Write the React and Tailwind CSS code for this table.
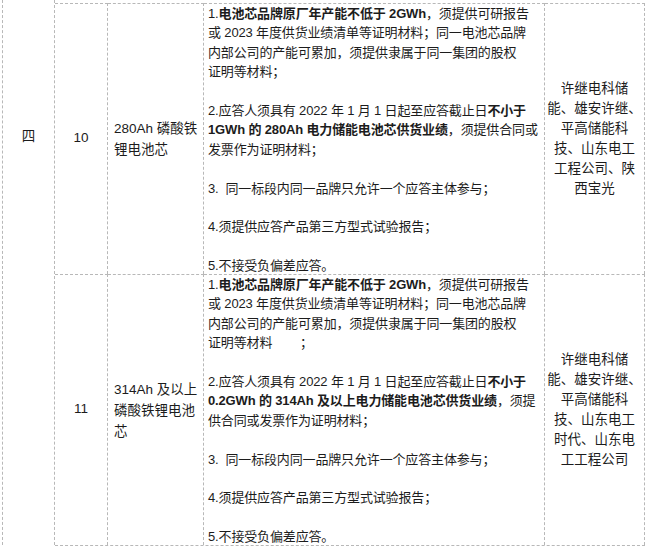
const rows = [
  {
    no: '10',
    name: ['280Ah 磷酸铁', '锂电池芯'],
    lines: [
      [['1.', false], ['电池芯品牌原厂年产能不低于 2GWh', true], ['，须提供可研报告', false]],
      [['或 2023 年度供货业绩清单等证明材料；同一电池芯品牌', false]],
      [['内部公司的产能可累加，须提供隶属于同一集团的股权', false]],
      [['证明等材料；', false]],
      null,
      [['2.应答人须具有 2022 年 1 月 1 日起至应答截止日', false], ['不小于', true]],
      [['1GWh 的 280Ah 电力储能电池芯供货业绩', true], ['，须提供合同或', false]],
      [['发票作为证明材料；', false]],
      null,
      [['3.  同一标段内同一品牌只允许一个应答主体参与；', false]],
      null,
      [['4.须提供应答产品第三方型式试验报告；', false]],
      null,
      [['5.不接受负偏差应答。', false]],
    ],
    vendors: ['许继电科储', '能、雄安许继、', '平高储能科', '技、山东电工', '工程公司、陕', '西宝光'],
  },
  {
    no: '11',
    name: ['314Ah 及以上', '磷酸铁锂电池', '芯'],
    lines: [
      [['1.', false], ['电池芯品牌原厂年产能不低于 2GWh', true], ['，须提供可研报告', false]],
      [['或 2023 年度供货业绩清单等证明材料；同一电池芯品牌', false]],
      [['内部公司的产能可累加，须提供隶属于同一集团的股权', false]],
      [['证明等材料        ；', false]],
      null,
      [['2.应答人须具有 2022 年 1 月 1 日起至应答截止日', false], ['不小于', true]],
      [['0.2GWh 的 314Ah 及以上电力储能电池芯供货业绩', true], ['，须提', false]],
      [['供合同或发票作为证明材料；', false]],
      null,
      [['3.  同一标段内同一品牌只允许一个应答主体参与；', false]],
      null,
      [['4.须提供应答产品第三方型式试验报告；', false]],
      null,
      [['5.不接受负偏差应答。', false]],
    ],
    vendors: ['许继电科储', '能、雄安许继、', '平高储能科', '技、山东电工', '时代、山东电', '工工程公司'],
  },
];

const font = { fontFamily: '"Liberation Sans", "Noto Sans CJK SC", sans-serif' };

export default function App() {
  return (
    <div className="w-[660px] h-[547px] bg-white overflow-hidden text-[13.5px] text-[#1c1c1c] pl-[2px]" style={font}>
      <div className="flex">
        {/* merged first column, starts above the visible area */}
        <div className="w-[53px] h-[545px] border-l border-r border-dashed border-[#b8b8b8] flex justify-center pt-[127px] leading-[20px]">
          四
        </div>

        <div className="pt-[3px]">
          <div className="grid grid-cols-[53px_96px_341px_100px] grid-rows-[271px_271px] border-b border-dashed border-[#b8b8b8]">
            {rows.map((r) => (
              <div key={r.no} className="contents">
                <div className="border-t border-r border-dashed border-[#b8b8b8] flex items-center justify-center pb-[2px]">
                  {r.no}
                </div>
                <div className="border-t border-r border-dashed border-[#b8b8b8] flex flex-col justify-center pl-[6px] leading-[21px]">
                  {r.name.map((n) => (
                    <div key={n} className="whitespace-nowrap">{n}</div>
                  ))}
                </div>
                <div className="border-t border-r border-dashed border-[#b8b8b8] pl-[4px] text-[13px] tracking-[-0.15px] leading-[19.4px] overflow-hidden">
                  {r.lines.map((line, i) => (
                    <div key={i} className="h-[19.4px] whitespace-pre">
                      {line
                        ? line.map(([t, b], j) => (
                            <span key={j} className={b ? 'font-bold' : ''}>{t}</span>
                          ))
                        : ''}
                    </div>
                  ))}
                </div>
                <div className="border-t border-r border-dashed border-[#b8b8b8] flex flex-col items-center justify-center leading-[20px]">
                  {r.vendors.map((v) => (
                    <div key={v} className="whitespace-nowrap">{v}</div>
                  ))}
                </div>
              </div>
            ))}
          </div>
        </div>
      </div>
    </div>
  );
}
